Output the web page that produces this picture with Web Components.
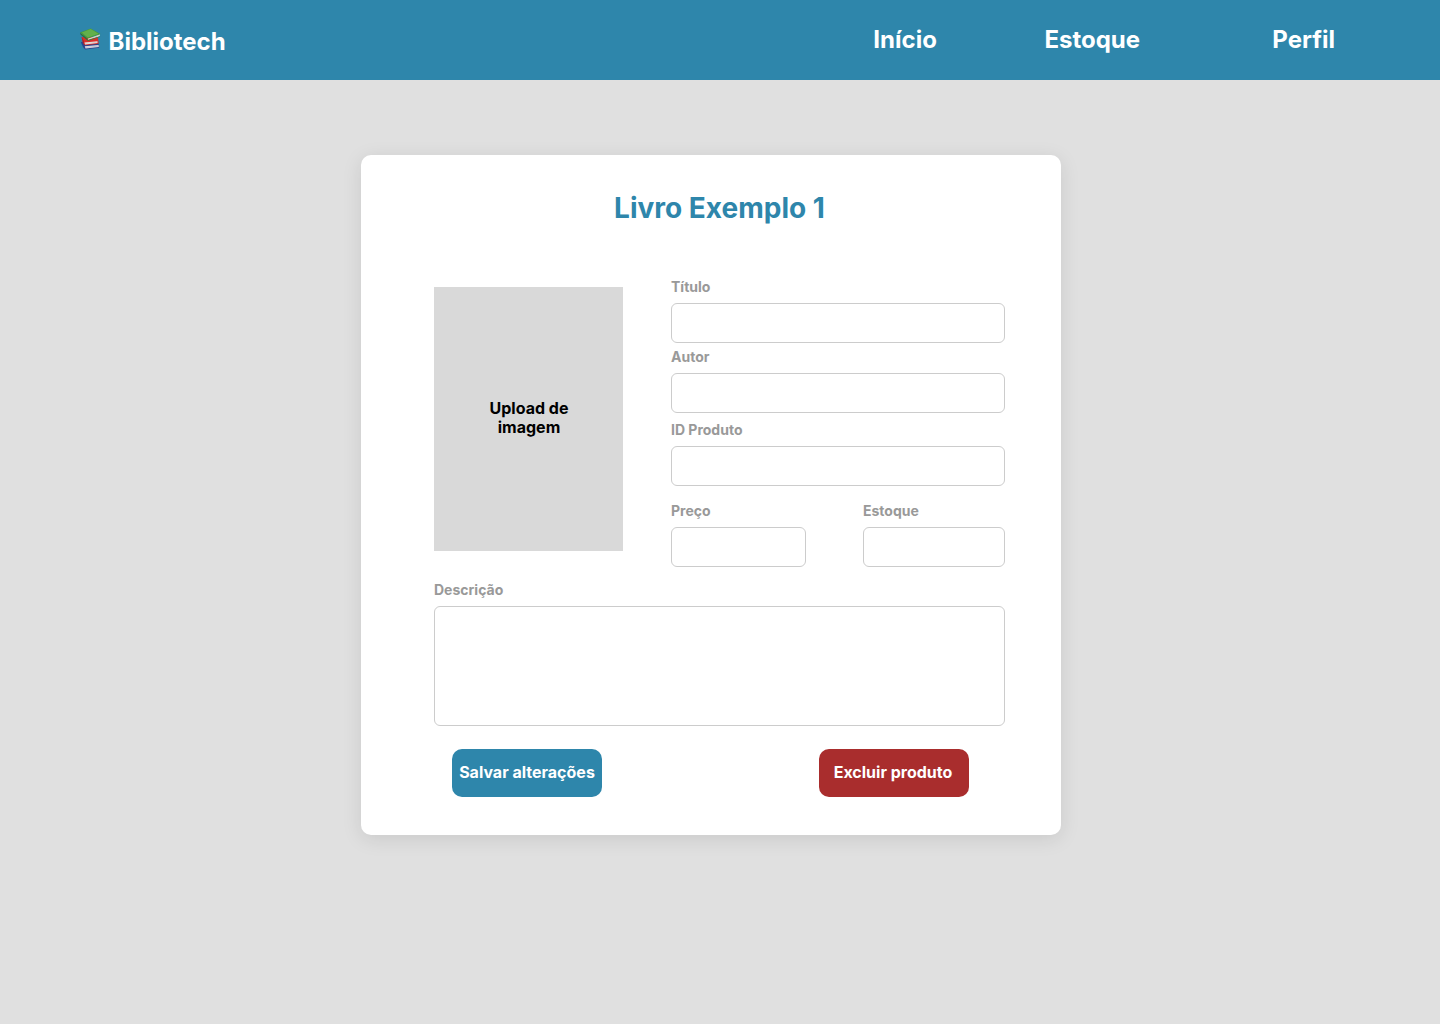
<!DOCTYPE html>
<html lang="pt-BR">
<head>
<meta charset="utf-8">
<title>Bibliotech</title>
<style>
body { margin: 0; background: #e0e0e0; font-family: Inter, "Liberation Sans", sans-serif; font-weight: 700; }
</style>
</head>
<body>
<library-page></library-page>
<script>
const define = (name, html) => customElements.define(name, class extends HTMLElement {
  constructor() {
    super();
    this.attachShadow({ mode: 'open' }).innerHTML = html;
  }
});

define('book-stack', `
<style>:host{display:block;width:22px;height:23px} svg{display:block}</style>
<svg width="22" height="23" viewBox="0 0 22 23">
  <path d="M.8 14.2 4 13.5 18.6 15.6 19.2 19.8 5.2 21.4 3.2 19.2Z" fill="#2c438c"/>
  <path d="M4.8 18.3 18.6 17 18.8 19 5.5 20.4Z" fill="#dcdbe4"/>
  <path d="M5.2 19.5 18.7 18.1" stroke="#a8a5b4" stroke-width=".4"/>
  <path d="M1.6 9 17.8 9.2 18.4 12.8 18.6 15.7 4.8 17.3 3 15Z" fill="#d92e2a"/>
  <path d="M1.6 9 3.6 12.6 4.8 17.3 3 15Z" fill="#a3232a"/>
  <path d="M4.5 14.4 17.5 13.3 17.5 15 5.1 16.4Z" fill="#eee8e5"/>
  <path d="M4.8 15.5 17.4 14.2" stroke="#b9a9a9" stroke-width=".4"/>
  <path d="M0 4.4 7.6 10.5 7.7 12.8 .7 6.7Z" fill="#2f703c"/>
  <path d="M0 4.4 10.7.4 20.5 6 7.7 10.6Z" fill="#489b3b"/>
  <path d="M1.9 4.4 10.7 1.1 18.5 5.8 7.7 9.6Z" fill="#63b04a"/>
  <path d="M7.9 10.8 20 6.5 19.8 8.2 8 12.1Z" fill="#ebe7dc"/>
  <path d="M8 11.5 19.9 7.3" stroke="#aaa69a" stroke-width=".4"/>
  <path d="M7.7 12.1 20 8.2 20.2 8.8 7.8 12.9Z" fill="#397d36"/>
</svg>`);

define('site-header', `
<style>
:host{display:block;height:80px;background:#2e86ab;color:#fff;font-size:24px;line-height:29px}
header{display:flex;padding:0 80px;height:80px;box-sizing:border-box}
.brand{display:flex;gap:6.5px;padding-top:27px}
book-stack{margin-top:1px}
nav{display:flex;margin-left:auto;padding:25px 25px 0 0}
.stock{margin-left:107.5px}
.profile{margin-left:132.3px}
</style>
<header><div class="brand"><book-stack></book-stack><span>Bibliotech</span></div>
<nav><span>Início</span><span class="stock">Estoque</span><span class="profile">Perfil</span></nav></header>`);

define('form-field', `
<style>
:host{display:block}
label{display:block;font-size:14px;line-height:16px;color:#999;margin-bottom:8px}
.box{height:var(--field-height,40px);box-sizing:border-box;border:1px solid #ccc;border-radius:6px;background:#fff}
</style>
<label><slot></slot></label><div class="box"></div>`);

define('image-upload', `
<style>
:host{display:flex;align-items:center;justify-content:center;text-align:center;width:189px;height:264px;box-sizing:border-box;padding:0 0 2px 1px;background:#d9d9d9;color:#000;font-size:16px;line-height:19px}
div{width:100px}
</style><div><slot></slot></div>`);

define('action-button', `
<style>
:host{display:flex;align-items:center;justify-content:center;width:150px;height:48px;box-sizing:border-box;padding-bottom:1px;border-radius:10px;background:var(--button-color,#2e86ab);color:#fff;font-size:16px;line-height:19px;white-space:nowrap}
</style><slot></slot>`);

define('product-card', `
<style>
:host{display:block;box-sizing:border-box;width:700px;height:680px;background:#fff;border-radius:10px;box-shadow:0 4px 20px rgba(0,0,0,.1);padding:36px 56px 0 73px}
h1{margin:0;text-align:center;font-size:28px;line-height:34px;color:#2e86ab}
.top{display:flex;justify-content:space-between;margin-top:54px}
image-upload{margin-top:8px}
.fields{width:334px}
.author{margin-top:6px}.id{margin-top:9px}
.pair{display:flex;justify-content:space-between;margin-top:17px}
.price{width:135px}.stock{width:142px}
.description{margin-top:15px;--field-height:120px}
.actions{display:flex;justify-content:space-between;padding:23px 36px 0 18px}
.remove{--button-color:#a92d2d;padding-right:2px}
</style>
<h1>Livro Exemplo 1</h1>
<div class="top">
  <image-upload>Upload de<br>imagem</image-upload>
  <div class="fields">
    <form-field>Título</form-field>
    <form-field class="author">Autor</form-field>
    <form-field class="id">ID Produto</form-field>
    <div class="pair"><form-field class="price">Preço</form-field><form-field class="stock">Estoque</form-field></div>
  </div>
</div>
<form-field class="description">Descrição</form-field>
<div class="actions"><action-button>Salvar alterações</action-button><action-button class="remove">Excluir produto</action-button></div>`);

define('library-page', `
<style>
:host{display:block;height:1024px;overflow:hidden;background:#e0e0e0}
main{padding:75px 0 0 361px}
</style>
<site-header></site-header><main><product-card></product-card></main>`);
</script>
</body>
</html>
